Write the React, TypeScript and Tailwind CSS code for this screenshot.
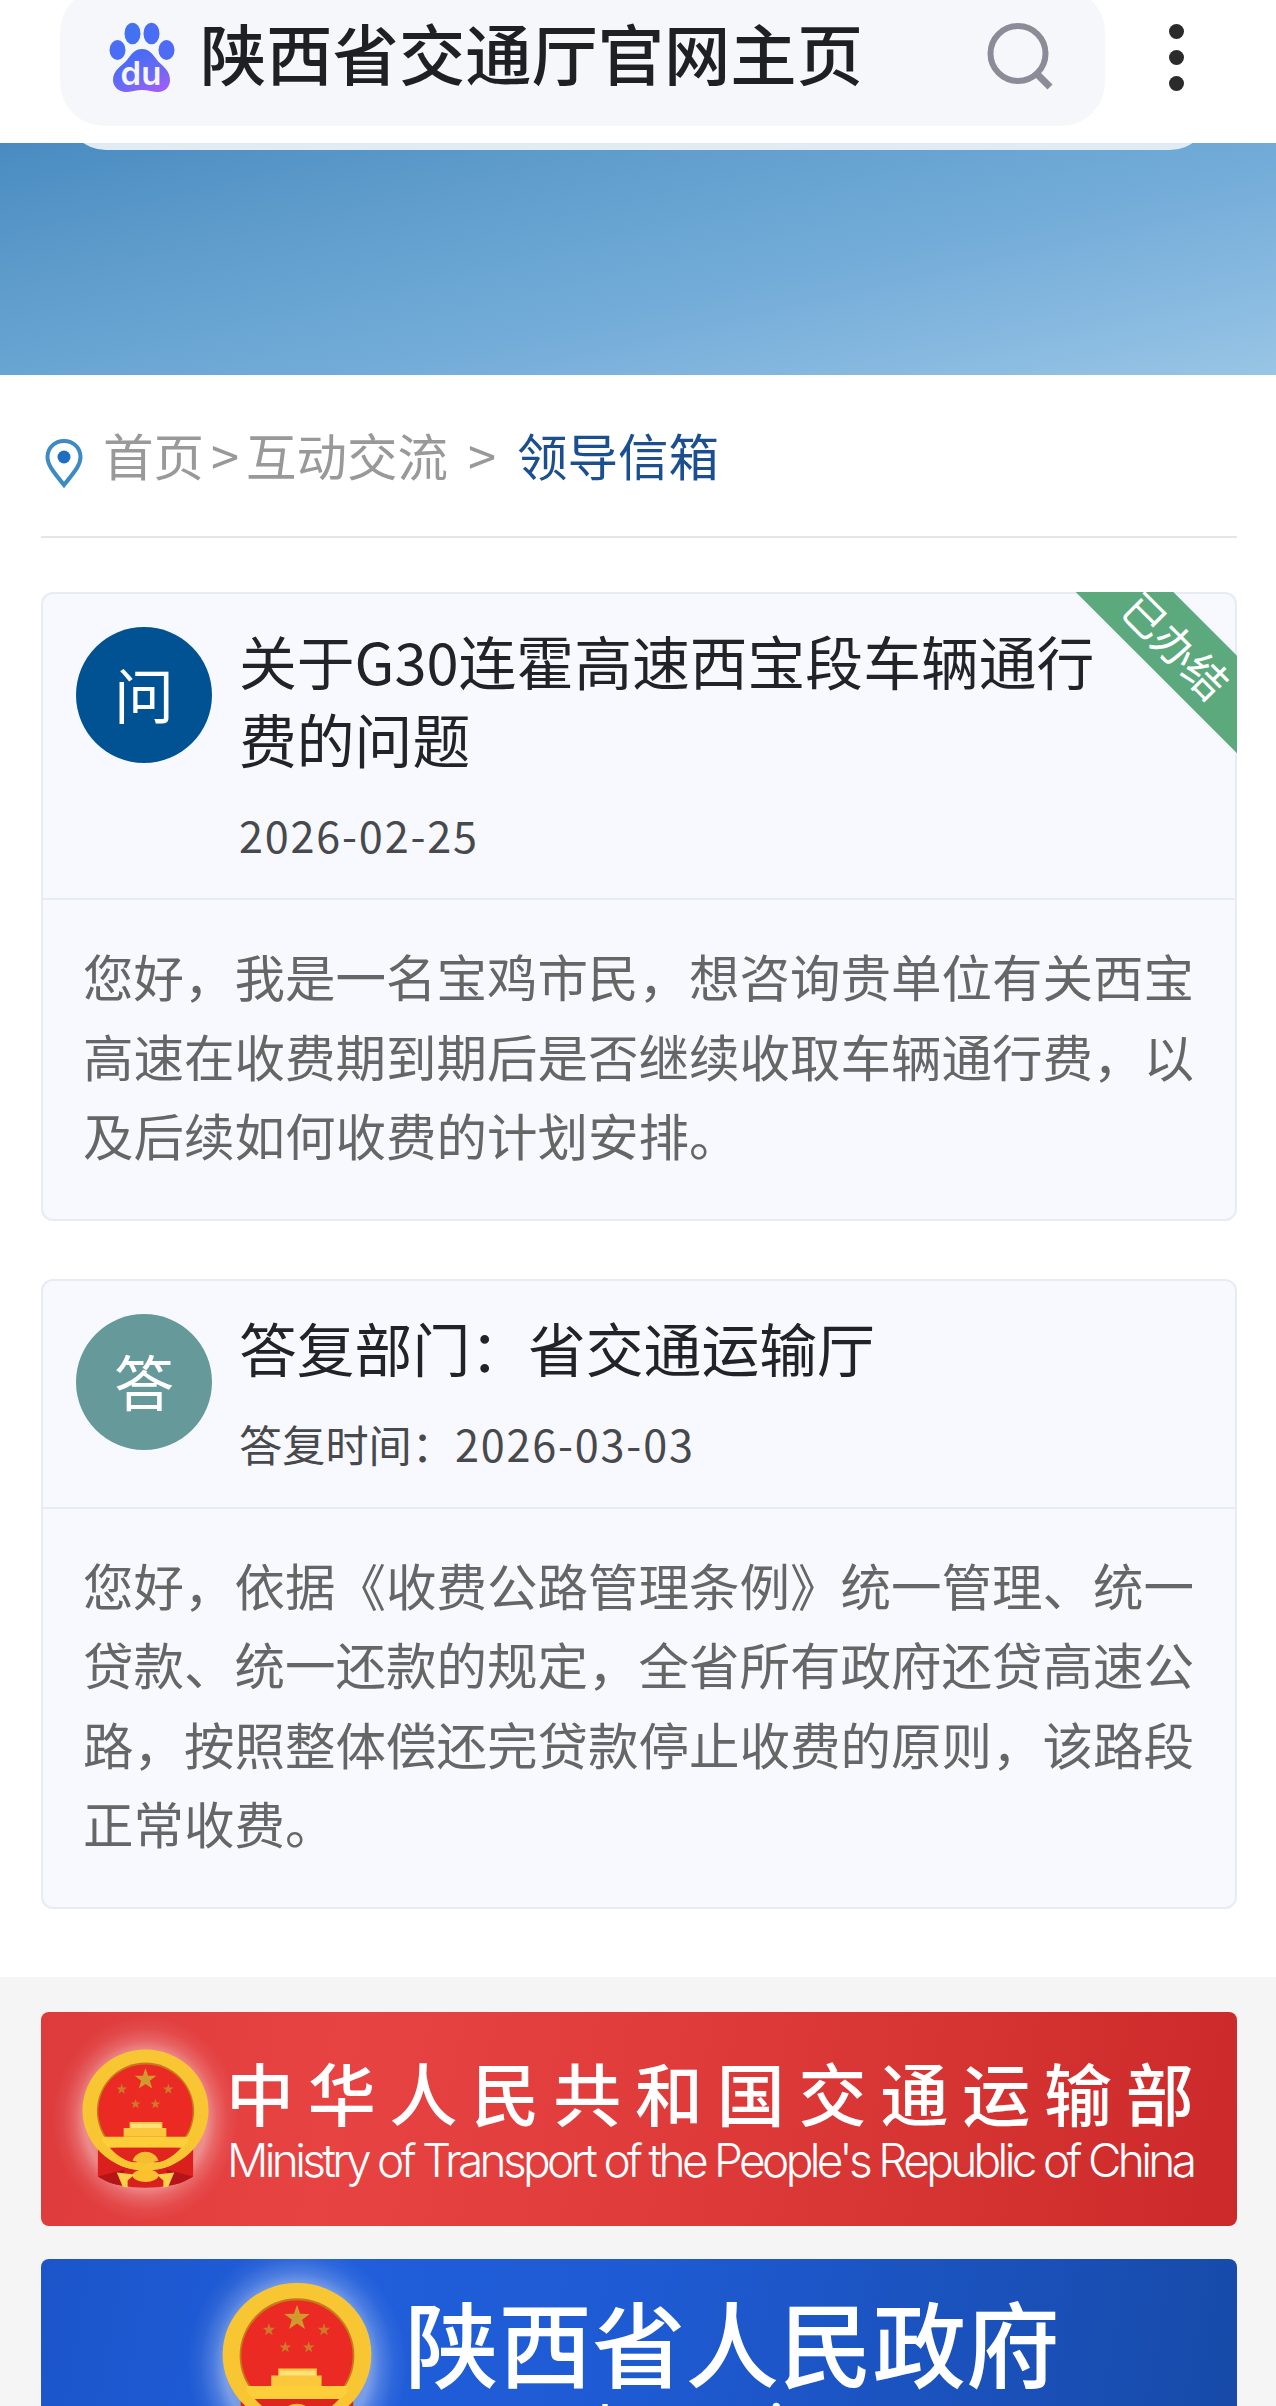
import type { ReactNode } from "react";

interface LetterCardProps {
  avatar: string;
  avatarClass: string;
  title: string;
  meta: ReactNode;
  body: string;
  ribbon?: string;
}

function BaiduLogo() {
  return (
    <svg viewBox="0 0 66 70" className="h-[70px] w-[66px] shrink-0">
      <defs>
        <linearGradient id="paw" x1="0.2" y1="0" x2="0.8" y2="1">
          <stop offset="0.2" stopColor="#4a6bf5" />
          <stop offset="0.6" stopColor="#6a69f5" />
          <stop offset="1" stopColor="#a05df6" />
        </linearGradient>
      </defs>
      <ellipse cx="23.500" cy="11.500" rx="8" ry="10.800" fill="#4470f2" />
      <ellipse cx="42.500" cy="11.500" rx="8" ry="10.800" fill="#4a6df5" />
      <ellipse cx="8.500" cy="28" rx="8" ry="10" fill="#4a6df5" />
      <ellipse cx="57.500" cy="28" rx="8" ry="10" fill="#4f6af5" />
      <path
        d="M33 27c8 0 11 6 15 11 5 6 13 10 13 20 0 7-5 12-12 12-5 0-10-2-16-2s-11 2-16 2C10 70 4 65 4 58c0-10 9-14 14-20 4-5 7-11 15-11z"
        fill="url(#paw)"
      />
      <text x="32" y="63" textAnchor="middle" fontSize="33" fontWeight="600" fill="#f3f6ff" fontFamily="Inter, sans-serif">
        du
      </text>
    </svg>
  );
}

function PinIcon() {
  return (
    <svg viewBox="0 0 40 50" className="mt-4 ml-[3px] h-[50px] w-10 shrink-0">
      <path
        d="M20 3C10.500 3 3.500 10 3.500 19c0 9 8 17 16.500 28C28.500 36 36.500 28 36.500 19 36.500 10 29.500 3 20 3z"
        fill="none"
        stroke="#3e8ac4"
        strokeWidth="4"
      />
      <circle cx="20" cy="19" r="6.500" fill="#1d6fc0" />
    </svg>
  );
}

const STAR = "M0-10 2.300-3.200 9.500-3.100 3.800 1.200 5.900 8.100 0 4-5.900 8.100-3.800 1.200-9.500-3.100-2.300-3.200z";

function Emblem({ className, halo }: { className: string; halo: string }) {
  return (
    <svg viewBox="0 0 128 140" className={`overflow-visible ${className}`}>
      <defs>
        <radialGradient id={halo}>
          <stop offset="0.66" stopColor="#fff" stopOpacity="0.4" />
          <stop offset="0.76" stopColor="#fff" stopOpacity="0.2" />
          <stop offset="0.88" stopColor="#fff" stopOpacity="0.06" />
          <stop offset="1" stopColor="#fff" stopOpacity="0" />
        </radialGradient>
      </defs>
      <ellipse cx="64" cy="70" rx="94" ry="104" fill={`url(#${halo})`} />
      <path d="M16 98v30c8 5 15 8 24 9 16 3 32 3 48 0 9-1 16-4 24-9V98z" fill="#d9201c" />
      <path d="M16 128c8 5 15 8 24 9l3-16zM112 128c-8 5-15 8-24 9l-3-16z" fill="#b5151a" />
      <ellipse cx="64" cy="61" rx="63.500" ry="61" fill="#f9c633" />
      <circle cx="64" cy="62" r="49" fill="#c8781c" />
      <ellipse cx="64" cy="62" rx="47.500" ry="47" fill="#ec2a24" />
      <path d={STAR} fill="#d29a2c" transform="translate(64 30) scale(1.150)" />
      <g fill="#cf7a2a">
        <path d={STAR} transform="translate(40 40) scale(.56)" />
        <path d={STAR} transform="translate(87 40) scale(.56)" />
        <path d={STAR} transform="translate(54 55) scale(.52)" />
        <path d={STAR} transform="translate(74 55) scale(.52)" />
      </g>
      <path d="M48 73h33v6h4v9H42v-9h6z" fill="#fbc83c" />
      <path d="M49 75h31v4H49z" fill="#ffe07a" />
      <path d="M21 88h86v5l-4 6H25l-4-6z" fill="#fccf3a" />
      {/* red field under the gate, closed off by the lower wreath */}
      <path d="M28 99h72c-8 9-20 17-36 17S36 108 28 99z" fill="#e0251f" />
      <path
        d="M20 97c11 13 24 21 36 20l8-4 8 4c12 1 25-7 36-20"
        fill="none"
        stroke="#f9c633"
        strokeWidth="7"
      />
      <path d="M51 112c4-12 22-12 26 0l-13 3z" fill="#f7bd31" />
      <ellipse cx="64" cy="127" rx="13" ry="6.500" fill="#fbc22d" />
      <path d="M35 124l18 2-7 6v7l-5-1zM93 124l-18 2 7 6v7l5-1z" fill="#fbd04a" />
    </svg>
  );
}

function LetterCard({ avatar, avatarClass, title, meta, body, ribbon }: LetterCardProps) {
  return (
    <article className="relative overflow-hidden rounded-xl bg-[#f7f9ff] p-0.5 shadow-[inset_0_0_0_2px_#e6ecf3]">
      <header className="flex items-start gap-[27px] border-b-2 border-[#e6ecf3] pt-[33px] pb-6 pl-[33px]">
        <div
          className={`flex size-[136px] shrink-0 items-center justify-center rounded-full pb-1 text-[60px] text-white ${avatarClass}`}
        >
          {avatar}
        </div>
        <div className="-mt-1.5">
          <h2 className="w-[870px] text-[57.800px] leading-[78px] text-[#212329]">{title}</h2>
          <p className="mt-[18px] text-[43.200px] leading-[79px] text-[#48494c]">{meta}</p>
        </div>
      </header>
      <p className="pt-9 pr-[38px] pb-11 pl-10 text-[50.500px] leading-[79.500px] text-[#666]">{body}</p>
      {ribbon && (
        <div className="absolute top-[18px] right-[-96px] flex h-[69px] w-[312px] rotate-45 items-center justify-center bg-[#5ba97c] text-[43px] text-white">
          {ribbon}
        </div>
      )}
    </article>
  );
}

export default function App() {
  return (
    <div className="flex h-[2406px] w-[1276px] flex-col overflow-hidden bg-white font-['Noto_Sans_CJK_SC',sans-serif]">
      <div className="flex h-[143px] shrink-0 items-start bg-white pl-[60px]">
        <div className="-mt-3 flex h-[138px] w-[1045px] items-center rounded-[44px] bg-[#f6f7fa] pl-[49px]">
          <BaiduLogo />
          <span className="ml-[25px] pb-3 text-[66.300px] leading-none font-medium whitespace-nowrap text-[#1f2024]">
            陕西省交通厅官网主页
          </span>
          <svg viewBox="0 0 70 70" className="ml-auto mr-[50px] size-[70px] shrink-0" fill="none" stroke="#8b8c97" strokeWidth="6">
            <circle cx="33" cy="31.500" r="27.500" />
            <path d="M52 52l13 13" strokeWidth="7" />
          </svg>
        </div>
        <div className="mt-[24px] ml-[64px] flex flex-col gap-[11px]">
          <i className="size-[15px] rounded-full bg-[#2b2b2b]" />
          <i className="size-[15px] rounded-full bg-[#2b2b2b]" />
          <i className="size-[15px] rounded-full bg-[#2b2b2b]" />
        </div>
      </div>

      <div className="h-[232px] shrink-0 overflow-hidden bg-[linear-gradient(167deg,#498bc1_0%,#5c9aca_24%,#69a5d3_44%,#72abd8_58%,#84b7df_78%,#98c5e5_100%)]">
        <div className="mx-[66px] -mt-[73px] h-20 rounded-[52px] bg-[#e0ebf3]" />
      </div>

      <main className="h-[1602px] shrink-0 pr-[39px] pl-[41px]">
        <nav className="flex h-[163px] items-center border-b-2 border-[#e3e5e6] pb-0.5 text-[50.500px] leading-none text-[#999]">
          <PinIcon />
          <span className="ml-[19px]">首页</span>
          <span className="mx-[7px]">&gt;</span>
          <span>互动交流</span>
          <span className="mr-[21px] ml-[20px]">&gt;</span>
          <span className="text-[#1b4f8f]">领导信箱</span>
        </nav>
        <div className="mt-[54px] flex flex-col gap-[58px]">
          <LetterCard
            avatar="问"
            avatarClass="bg-[#005293]"
            title="关于G30连霍高速西宝段车辆通行费的问题"
            meta={<span className="tracking-[1.800px]">2026-02-25</span>}
            body="您好，我是一名宝鸡市民，想咨询贵单位有关西宝高速在收费期到期后是否继续收取车辆通行费，以及后续如何收费的计划安排。"
            ribbon="已办结"
          />
          <LetterCard
            avatar="答"
            avatarClass="bg-[#669999]"
            title="答复部门：省交通运输厅"
            meta={
              <>
                答复时间：<span className="tracking-[1.800px]">2026-03-03</span>
              </>
            }
            body="您好，依据《收费公路管理条例》统一管理、统一贷款、统一还款的规定，全省所有政府还贷高速公路，按照整体偿还完贷款停止收费的原则，该路段正常收费。"
          />
        </div>
      </main>

      <footer className="flex flex-1 flex-col gap-[33px] bg-[#f5f5f5] pt-[35px] pr-[39px] pl-[41px]">
        <a className="flex h-[214px] shrink-0 items-start overflow-hidden rounded-lg bg-[linear-gradient(100deg,#de3b3c_0%,#e84343_25%,#e03c3c_50%,#cc2a2a_100%)] pl-[41px] text-white">
          <Emblem className="mt-[37px] h-[140px] w-[127px]" halo="haloRed" />
          <div className="ml-[17px] whitespace-nowrap">
            <p className="mt-[42px] text-[68px] leading-[76px] font-medium tracking-[13.800px]">中华人民共和国交通运输部</p>
            <p className="mt-[7px] ml-px font-['Inter'] text-[46px] leading-[46px] font-light tracking-[-3.680px]">
              Ministry of Transport of the People's Republic of China
            </p>
          </div>
        </a>
        <a className="flex h-[213px] shrink-0 items-start overflow-hidden rounded-lg bg-[linear-gradient(100deg,#1c55ca_0%,#205edb_25%,#1e5ad2_50%,#174aa8_100%)] pl-[181px] text-white">
          <Emblem className="mt-6 h-[164px] w-[150px]" halo="haloBlue" />
          <div className="ml-[33px] whitespace-nowrap">
            <p className="mt-[34px] text-[93.500px] leading-[96px] font-medium">陕西省人民政府</p>
            <p className="mt-[7px] ml-px font-['Inter'] text-[60px] leading-[60px]">www.shaanxi.gov.cn</p>
          </div>
        </a>
      </footer>
    </div>
  );
}
